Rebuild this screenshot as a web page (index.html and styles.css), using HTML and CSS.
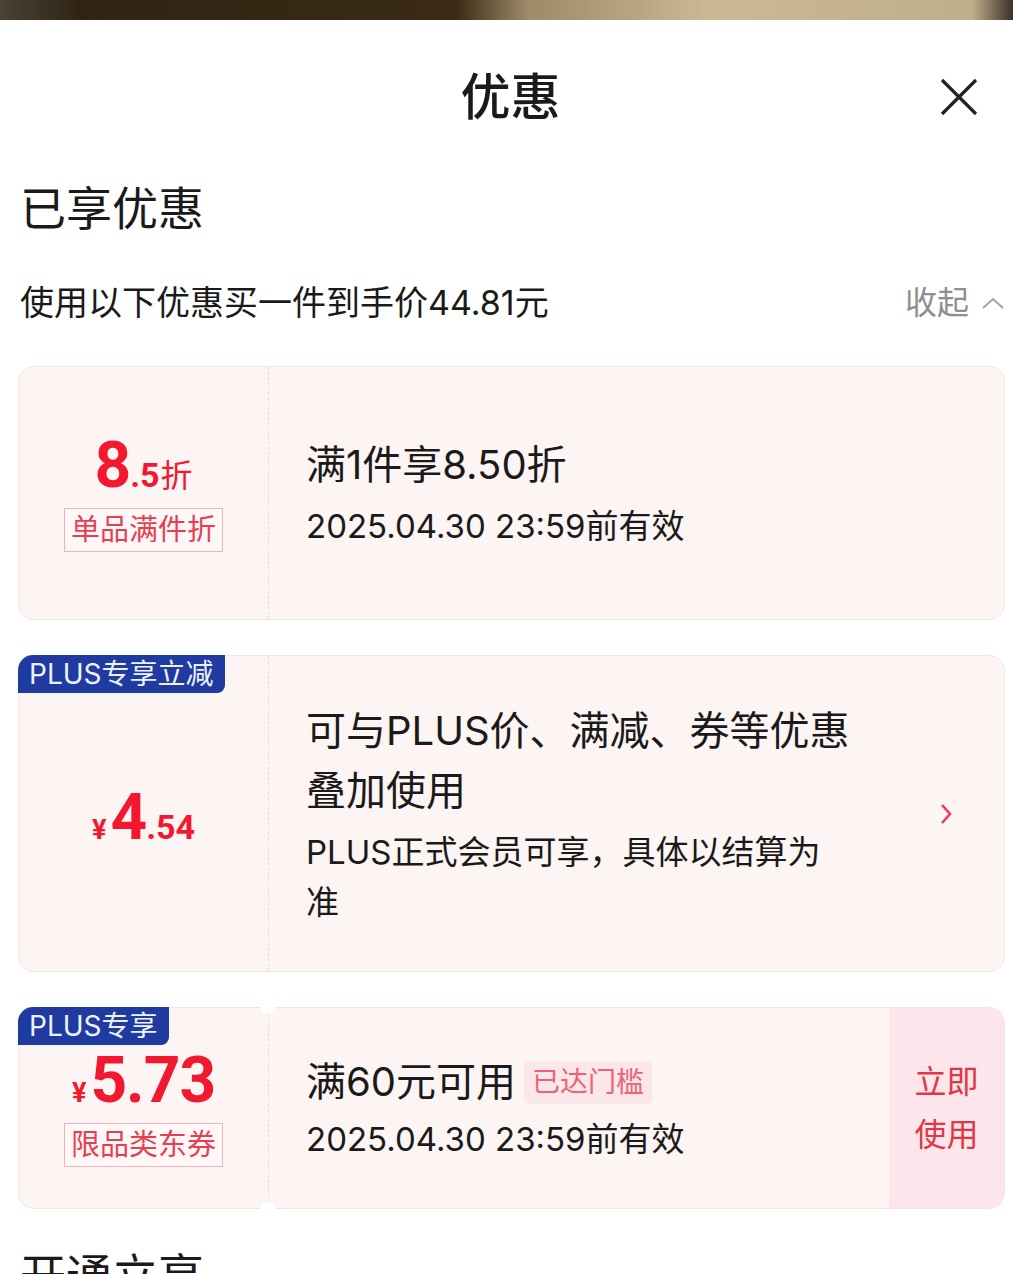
FILE: index.html
```html
<!DOCTYPE html>
<html lang="zh-CN">
<head>
  <meta charset="UTF-8" />
  <meta name="viewport" content="width=device-width, initial-scale=1.0"/>
  <title>优惠</title>
  <link rel="stylesheet" href="styles.css">
</head>
<body>
  <div class="banner"></div>
  <div class="sheet">
    <header class="sheet-header">
      <span></span>
      <h1 class="sheet-title">优惠</h1>
      <button class="close-btn" aria-label="关闭">
        <svg width="38" height="38" viewBox="0 0 38 38"><path d="M2 2 L36 36 M36 2 L2 36" stroke="#222" stroke-width="3.2" fill="none"/></svg>
      </button>
    </header>

    <h2 class="section-title">已享优惠</h2>
    <div class="summary">
      <span>使用以下优惠买一件到手价44.81元</span>
      <span class="collapse">收起
        <svg width="24" height="14" viewBox="0 0 24 14"><path d="M2 12 L12 3 L22 12" stroke="#a3a3a3" stroke-width="2" fill="none"/></svg>
      </span>
    </div>

    <div class="coupon-list">
      <div class="coupon coupon-discount">
        <div class="coupon-left">
          <div class="amount"><span class="num-big">8</span><span class="num-small">.5</span><span class="unit">折</span></div>
          <span class="tag">单品满件折</span>
        </div>
        <div class="coupon-right">
          <div class="coupon-info">
            <div class="coupon-title">满1件享8.50折</div>
            <div class="coupon-sub">2025.04.30 23:59前有效</div>
          </div>
        </div>
      </div>

      <div class="coupon coupon-plus">
        <span class="badge">PLUS专享立减</span>
        <div class="coupon-left">
          <div class="amount"><span class="yen">¥</span><span class="num-big">4</span><span class="num-small">.54</span></div>
        </div>
        <div class="coupon-right">
          <div class="coupon-info wide">
            <div class="coupon-title">可与PLUS价、满减、券等优惠叠加使用</div>
            <div class="coupon-sub">PLUS正式会员可享，具体以结算为准</div>
          </div>
          <svg class="arrow" width="12" height="24" viewBox="0 0 12 24"><path d="M2 3 L10 12 L2 21" stroke="#e8405a" stroke-width="2.6" fill="none"/></svg>
        </div>
      </div>

      <div class="coupon coupon-voucher">
        <span class="badge">PLUS专享</span>
        <div class="coupon-left">
          <div class="amount"><span class="yen">¥</span><span class="num-big">5.73</span></div>
          <span class="tag">限品类东券</span>
        </div>
        <div class="coupon-right">
          <div class="coupon-info">
            <div class="coupon-title">满60元可用<span class="reached">已达门槛</span></div>
            <div class="coupon-sub">2025.04.30 23:59前有效</div>
          </div>
        </div>
        <div class="use-now">立即<br>使用</div>
      </div>
    </div>

    <h2 class="section-title next">开通立享</h2>
  </div>
</body>
</html>
```

FILE: styles.css
```css
body {
  font-family: Inter, "Noto Sans CJK SC", sans-serif;
  background-color: #fff;
  color: #1a1a1a;
  margin: 0;
  padding: 0;
  overflow: hidden;
}
.banner {
  height: 20px;
  background: linear-gradient(90deg, #4a4236 0%, #2f2414 8%, #3a2a14 45%, #9c8a68 52%, #cbb994 70%, #bfae8c 96%, #3a3025 100%);
}
.sheet {
  background-color: #fff;
  border-radius: 14px 14px 0 0;
}
.sheet-header {
  height: 154px;
  display: grid;
  grid-template-columns: 1fr auto 1fr;
  align-items: center;
  padding-right: 35px;
  padding-left: 35px;
}
.sheet-title {
  margin: 0;
  font-size: 50px;
  font-weight: 500;
  line-height: 60px;
  padding-left: 8px;
}
.close-btn {
  justify-self: end;
  background: none;
  border: none;
  padding: 0;
  height: 38px;
  cursor: pointer;
}
.section-title {
  margin: 4px 0 0 20px;
  font-size: 46px;
  font-weight: 400;
  line-height: 60px;
}
.summary {
  margin-top: 41px;
  display: flex;
  justify-content: space-between;
  align-items: center;
  padding: 0 8px 0 20px;
  font-size: 34px;
  line-height: 48px;
}
.collapse {
  display: flex;
  align-items: center;
  gap: 12px;
  color: #8e8e8e;
  font-size: 32px;
}
.coupon-list {
  margin-top: 39px;
  padding: 0 8px 0 18px;
  display: flex;
  flex-direction: column;
  gap: 35px;
}
.coupon {
  position: relative;
  display: grid;
  grid-template-columns: 250px 1fr;
  background-color: #fdf4f4;
  border: 1px solid #f7e3e4;
  border-radius: 16px;
  box-sizing: border-box;
}
.coupon-discount {
  min-height: 254px;
}
.coupon-plus {
  min-height: 317px;
}
.coupon-voucher {
  min-height: 202px;
  grid-template-columns: 250px 1fr 115px;
}
.coupon-voucher::before,
.coupon-voucher::after {
  content: "";
  position: absolute;
  left: 242px;
  width: 14px;
  height: 14px;
  border-radius: 50%;
  background-color: #fff;
}
.coupon-voucher::before {
  top: -8px;
}
.coupon-voucher::after {
  bottom: -8px;
}
.coupon-left {
  border-right: 1px dashed #f3d6d9;
  display: flex;
  flex-direction: column;
  align-items: center;
  justify-content: center;
  color: #f2182f;
}
.coupon-plus .coupon-left {
  padding-top: 8px;
}
.amount {
  font-family: Roboto, "Liberation Sans", sans-serif;
  font-weight: 700;
  line-height: 64px;
  height: 64px;
  display: flex;
  align-items: baseline;
}
.num-big {
  font-size: 64px;
  letter-spacing: -1px;
}
.num-small {
  font-size: 34px;
}
.yen {
  font-size: 27px;
  margin-right: 4px;
}
.unit {
  font-family: "Noto Sans CJK SC", sans-serif;
  font-weight: 400;
  font-size: 32px;
  margin-left: 1px;
}
.tag {
  margin-top: 10px;
  padding: 0 6px;
  font-size: 29px;
  line-height: 42px;
  color: #e5404f;
  border: 1px solid #f0b4b9;
  background-color: #fff7f7;
}
.coupon-right {
  padding-left: 37px;
  display: flex;
  align-items: center;
  justify-content: space-between;
}
.coupon-info.wide {
  width: 556px;
}
.coupon-title {
  font-size: 40px;
  line-height: 60px;
  display: flex;
  align-items: center;
}
.coupon-info.wide .coupon-title {
  display: block;
}
.coupon-sub {
  margin-top: 6px;
  font-size: 33px;
  line-height: 50px;
}
.coupon-info.wide .coupon-sub {
  max-width: 530px;
}
.coupon-voucher .coupon-sub {
  margin-top: 2px;
}
.arrow {
  margin-right: 52px;
}
.badge {
  position: absolute;
  top: -1px;
  left: -1px;
  padding: 0 11px;
  font-size: 28px;
  line-height: 38px;
  color: #eef1ff;
  background-color: #1f3b9f;
  border-radius: 15px 0 8px 0;
}
.reached {
  margin-left: 8px;
  padding: 0 8px;
  font-size: 28px;
  line-height: 43px;
  color: #ec6474;
  background-color: #fbe7ea;
  border-radius: 5px;
}
.use-now {
  display: flex;
  align-items: center;
  justify-content: center;
  background-color: #fde6eb;
  border-radius: 0 15px 15px 0;
  color: #e23545;
  font-size: 32px;
  line-height: 53px;
}
.section-title.next {
  margin-top: 36px;
}
```
